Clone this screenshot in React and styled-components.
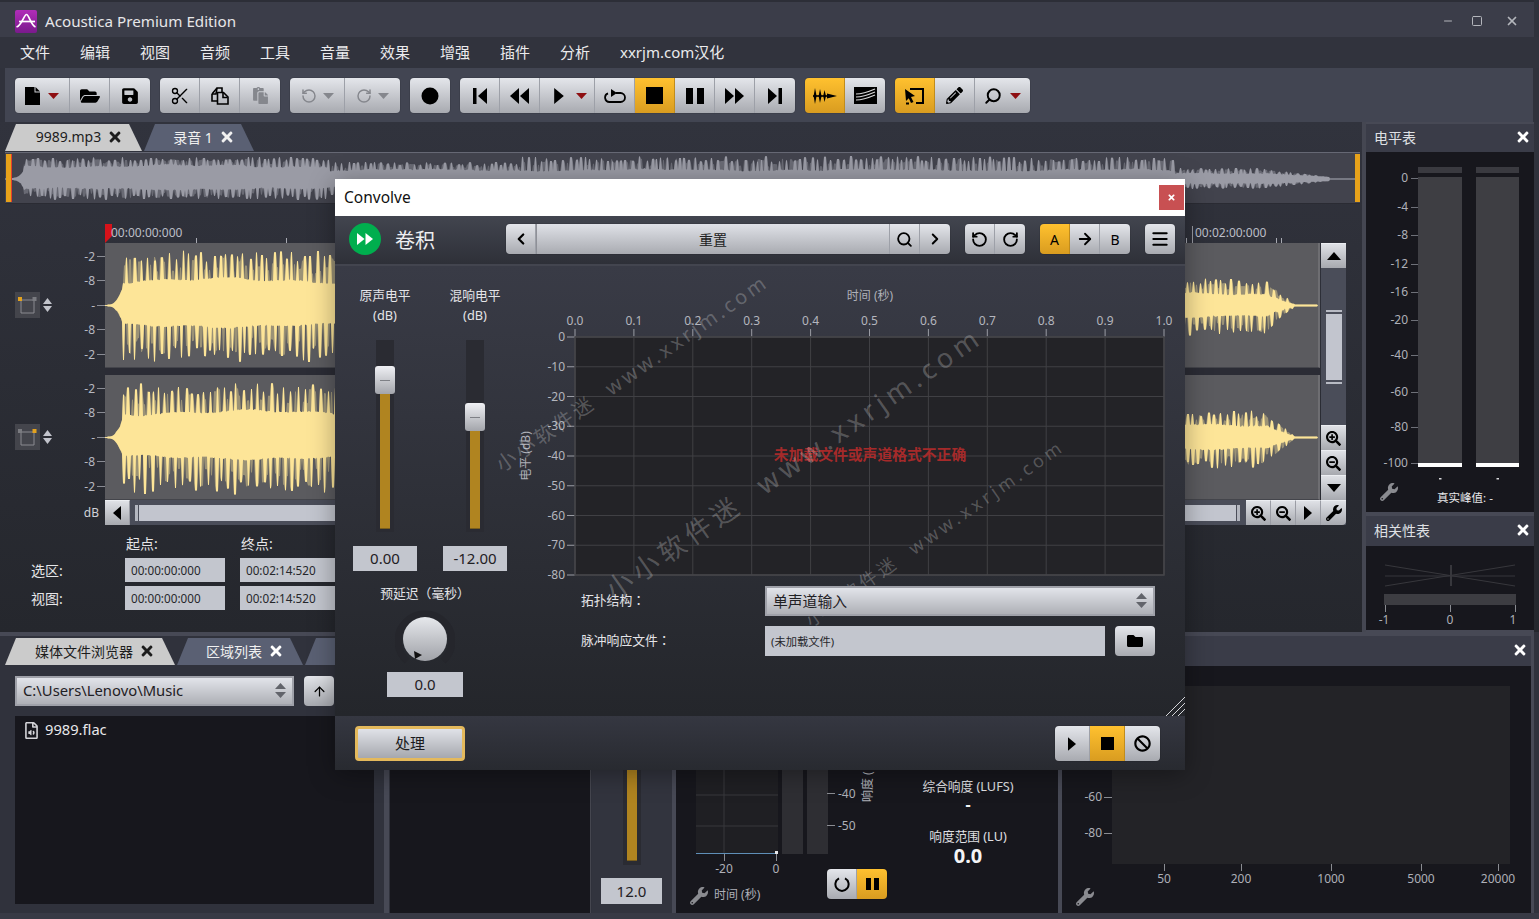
import React from 'react';
import styled, { createGlobalStyle } from 'styled-components';
import {
  FaFolderOpen, FaSave, FaPaste, FaTimes, FaWrench, FaSearchPlus, FaSearchMinus,
  FaPencilAlt, FaBan, FaFolder, FaRegFileAudio,
} from 'react-icons/fa';
import { Scissors, RotateCcw, RotateCw, Search, ChevronLeft, ChevronRight, ArrowRight, ArrowUp, Menu, Minus, Square, X } from 'lucide-react';

const FONT = `"Noto Sans", "Noto Sans CJK SC", "Open Sans", sans-serif`;

const Global = createGlobalStyle`
  html, body { margin: 0; padding: 0; background: #2b2d35; }
  * { box-sizing: border-box; }
  body { font-family: ${FONT}; }
`;

/* ---------- waveform data ---------- */
function makeRng(seed) {
  let s = seed;
  return () => {
    s = (s + 0x6d2b79f5) | 0;
    let t = Math.imul(s ^ (s >>> 15), 1 | s);
    t = (t + Math.imul(t ^ (t >>> 7), 61 | t)) ^ t;
    return ((t ^ (t >>> 14)) >>> 0) / 4294967296;
  };
}
function pulses(width, rand, minGap, maxGap, low) {
  const out = new Float32Array(width + 1);
  let x = 0;
  while (x < width) {
    const v = low + rand() * (1 - low);
    const reach = 1 + Math.floor(rand() * 2);
    for (let i = 0; i <= reach; i++) {
      if (x + i <= width) out[x + i] = Math.max(out[x + i], v);
    }
    x += minGap + Math.floor(rand() * (maxGap - minGap));
  }
  return out;
}
function wavePaths(width, center, seed, env, minGap = 5, maxGap = 9) {
  const rand = makeRng(seed);
  const pu = pulses(width, rand, minGap, maxGap, 0.6);
  const pd = pulses(width, rand, minGap, maxGap, 0.6);
  const su = pulses(width, rand, 3, 6, 0.35);
  const sd = pulses(width, rand, 3, 6, 0.35);
  const topS = [], botS = [], topH = [], botH = [];
  for (let x = 0; x <= width; x++) {
    const [tipU, coreU0, coreD0, tipD] = env(x);
    const slow = 1 + 0.08 * Math.sin(x / 37 + seed) + 0.05 * Math.sin(x / 11 + seed * 2);
    const active = coreU0 > 4;
    const coreU = active ? coreU0 * slow + (rand() - 0.5) * 1.5 : coreU0;
    const coreD = active ? coreD0 * slow + (rand() - 0.5) * 1.5 : coreD0;
    const up = coreU + Math.max(0, tipU - coreU) * pu[x];
    const dn = coreD + Math.max(0, tipD - coreD) * pd[x];
    const softU = Math.max(up, coreU + Math.max(0, tipU - coreU) * su[x] * 0.8);
    const softD = Math.max(dn, coreD + Math.max(0, tipD - coreD) * sd[x] * 0.8);
    topH.push(`${x} ${(center - up).toFixed(1)}`);
    botH.push(`${x} ${(center + dn).toFixed(1)}`);
    topS.push(`${x} ${(center - softU).toFixed(1)}`);
    botS.push(`${x} ${(center + softD).toFixed(1)}`);
  }
  const poly = (a, b) => `M${a.join('L')}L${b.reverse().join('L')}Z`;
  return { soft: poly(topS, botS), hard: poly(topH, botH) };
}
const trackEnv = (x) => {
  if (x < 3) return [0.5, 0.5, 0.5, 0.5];
  if (x < 18) {
    const k = Math.pow((x - 3) / 15, 2.6);
    const v = 1 + k * 20;
    return [v, v, v, v];
  }
  if (x < 1060) return [55, 25, 20, 57];
  if (x < 1165) return [27, 12, 11, 31];
  if (x < 1190) {
    const k = (1190 - x) / 25;
    return [1 + 22 * k, 1 + 9 * k, 1 + 8 * k, 1 + 24 * k];
  }
  if (x < 1213) return [1, 1, 1, 1];
  return [0, 0, 0, 0];
};
const overviewEnv = (x) => {
  if (x < 5) return [0.6, 0.6, 0.6, 0.6];
  if (x < 19) {
    const v = 1 + Math.pow((x - 5) / 14, 3) * 8;
    return [v, v, v, v];
  }
  if (x < 325) return [22, 13, 10, 21];
  if (x < 515) return [17, 9, 9, 17];
  if (x < 1170) return [23, 9, 9, 20];
  if (x < 1325) {
    const k = Math.min(1, (1325 - x) / 70);
    return [2 + 9 * k, 2 + 4 * k, 2 + 3 * k, 2 + 8 * k];
  }
  if (x < 1351) return [0.6, 0.6, 0.6, 0.6];
  return [0, 0, 0, 0];
};
const WAVE_A = wavePaths(1215, 62.5, 11, trackEnv);
const WAVE_B = wavePaths(1215, 62.5, 29, trackEnv);
const WAVE_O = wavePaths(1355, 26, 47, overviewEnv, 4, 9);

/* ---------- shell ---------- */
const Root = styled.div`
  position: relative; width: 1539px; height: 919px; overflow: hidden;
  display: flex; flex-direction: column;
  background: #30323c; color: #e8e8ea; font-family: ${FONT};
`;
const TitleBar = styled.div`
  height: 37px; flex: none; display: flex; align-items: center; padding: 3px 15px 0 15px;
  background: #3b3d49; border-top: 2px solid #2c2e37; margin: 0 5px 0 0;
`;
const AppName = styled.span`
  margin-left: 8px; font-size: 15.2px; color: #e6e6e8;
`;
const WinControls = styled.div`
  margin-left: auto; display: flex; gap: 17px; align-items: center; color: #b4b6bc;
`;
const WinClose = styled.span`display: inline-flex; margin-left: 5px;`;
const MenuBar = styled.div`
  height: 31px; flex: none; display: flex; align-items: center; padding: 0 0 3px 20px; background: #31333d;
`;
const MenuItem = styled.span`
  width: 60px; font-size: 15px; white-space: nowrap; color: #ebebed;
`;
const ToolBar = styled.div`
  height: 54px; flex: none; margin: 0 6px 0 5px; padding: 10px; display: flex; gap: 10px; background: #424552;
`;
const Group = styled.div`
  display: flex; height: ${p => p.$h || 35}px; border-radius: 4px; overflow: hidden;
  box-shadow: 0 0 0 1px rgba(0,0,0,.08);
`;
const Btn = styled.button`
  width: ${p => p.$w || 40}px; height: 100%; padding: 0 0 0 ${p => p.$pl || 0}px; border: 0; flex: none;
  border-right: 1px solid ${p => p.$on ? '#c08c1c' : '#9da0a8'};
  &:last-child { border-right: 0; }
  display: flex; align-items: center; justify-content: center; gap: ${p => p.$gap || 0}px;
  color: ${p => p.$dim ? '#85878d' : '#000'};
  font-family: ${FONT}; font-size: 14px;
  background: ${p => p.$on
    ? 'linear-gradient(#ffc12f, #d99c20)'
    : 'linear-gradient(#e4e6eb, #a8aab0)'};
`;

/* ---------- middle ---------- */
const Middle = styled.div`
  height: 510px; flex: none; display: flex;
  background: linear-gradient(#31333d, #25272d);
`;
const LeftCol = styled.div`
  width: 1366px; flex: none; padding-left: 5px; border-right: 4px solid #454752; display: flex; flex-direction: column;
`;
const TabRow = styled.div`
  display: flex; gap: ${p => p.$gap ?? 2}px; height: ${p => p.$h || 27}px; margin-top: 2px; flex: none;
`;
const Tab = styled.div`
  width: ${p => p.$w}px; height: 100%; flex: none;
  clip-path: polygon(11px 0, calc(100% - 13px) 0, 100% 100%, 0 100%);
  display: flex; align-items: center; justify-content: center; gap: 6px;
  padding: 0 2px 2px ${p => p.$pad ?? 2}px;
  font-size: 14px; white-space: nowrap; overflow: hidden;
  background: ${p => p.$active ? '#cbcbcb' : '#5a6073'};
  color: ${p => p.$active ? '#1d1d1d' : '#f0f0f0'};
`;
const Overview = styled.div`
  width: 1355px; height: 52px; flex: none; position: relative; margin-top: 1px;
  background: #42434d; border-top: 1px solid #666874; border-bottom: 1px solid #2a2b33;
`;
const OverviewMark = styled.div`
  position: absolute; top: 1px; bottom: 1px; width: 5px; background: #e7a21a;
  ${p => p.$right ? 'right: 0;' : 'left: 1px; border-right: 1px solid #e8402a; width: 6px;'}
`;
const EditorGrid = styled.div`
  margin-top: 20px; display: grid; flex: none;
  grid-template-columns: 100px 1215px 26px;
  grid-template-rows: 19px 125px 7px 125px 25px;
`;
const RulerSvg = styled.svg`
  grid-column: 2 / 4; grid-row: 1; display: block;
`;
const Gutter = styled.div`
  grid-column: 1; grid-row: ${p => p.$row}; display: flex; padding-left: 10px;
`;
const ChannelCtl = styled.div`
  width: 38px; height: 26px; margin-top: ${p => p.$top}px; display: flex; align-items: center; gap: 3px; flex: none;
`;
const ChannelBox = styled.div`
  width: 25px; height: 26px; background: #44454c; display: flex; align-items: center; justify-content: center;
`;
const DbScale = styled.div`
  flex: 1; display: flex; flex-direction: column; justify-content: space-between; padding: 6px 0 7px;
`;
const DbRow = styled.div`
  height: 14px; display: flex; justify-content: flex-end; align-items: center; gap: 2px; font-size: 12px; color: #b6b8c0;
  &::after { content: ''; width: 8px; height: 1px; background: #8a8c94; }
`;
const Track = styled.div`
  grid-column: 2; grid-row: ${p => p.$row}; background: #5b5b5f; border-bottom: 1px solid #44454b; position: relative;
  border-right: 2px solid #6e6e72;
  svg { display: block; }
`;
const TrackGap = styled.div`
  grid-column: 2; grid-row: 3; background: #2b2c35;
`;
const VScroll = styled.div`
  grid-column: 3; grid-row: 2 / 5; display: flex; flex-direction: column; background: #4a4d59; margin-left: 1px;
`;
const ScrollBtn = styled.button`
  width: ${p => p.$w || 25}px; height: 25px; flex: none; padding: 0; border: 0;
  display: flex; align-items: center; justify-content: center; color: #000;
  border-top: 1px solid #eceef2;
  border-right: ${p => p.$sep ? '1px solid #9a9ca4' : '0'};
  border-bottom-right-radius: ${p => p.$round ? 4 : 0}px;
  background: linear-gradient(#dfe1e6, #a7a9af);
`;
const VThumb = styled.div`
  width: 16px; height: 74px; margin: 42px auto 0; background: #c2c5ce; flex: none;
  border-top: 2px solid #b8bbc4; border-bottom: 2px solid #b8bbc4;
  box-shadow: inset 0 2px 0 #4a4d59, inset 0 -2px 0 #4a4d59;
`;
const VSpacer = styled.div`flex: 1;`;
const DbUnit = styled.div`
  grid-column: 1; grid-row: 5; display: flex; align-items: center; justify-content: flex-end; padding-right: 6px; font-size: 12px; color: #d0d2d8;
`;
const HScroll = styled.div`
  grid-column: 2 / 4; grid-row: 5; display: flex; background: #4a4d59; align-items: center;
`;
const HThumb = styled.div`
  flex: 1; height: 16px; margin: 0 6px 0 5px; background: #c2c5ce;
  border-left: 3px solid #b4b7c0; border-right: 3px solid #b4b7c0;
  box-shadow: inset 1px 0 0 #4a4d59, inset -1px 0 0 #4a4d59;
`;
const SelGrid = styled.div`
  margin: 10px 0 0 26px; display: grid; grid-template-columns: 79px 100px 100px; column-gap: 15px;
  grid-template-rows: 19px 24px 24px; row-gap: 4px; font-size: 14px; color: #e6e6e8; flex: none;
`;
const SelHead = styled.div`line-height: 18px; padding-left: 1px;`;
const SelLabel = styled.div`line-height: 25px;`;
const SelValue = styled.div`
  height: 24px; background: #c3c6ce; color: #26272b; font-size: 11.7px; line-height: 25px; padding-left: 6px;
`;

/* ---------- right panels ---------- */
const RightCol = styled.div`
  width: 168px; flex: none; display: flex; flex-direction: column; padding-top: 2px; background: #474955;
`;
const PanelHead = styled.div`
  height: ${p => p.$h || 28}px; flex: none; background: #3a3c48; display: flex; align-items: center; justify-content: space-between;
  padding: 0 ${p => p.$pr ?? 3}px 2px 8px; font-size: 14px; color: #dfe0e4;
`;
const PanelBody = styled.div`
  background: #17171d; height: ${p => p.$h}px; flex: none; margin-bottom: ${p => p.$mb || 0}px;
  svg { display: block; }
`;

/* ---------- bottom ---------- */
const HSplit = styled.div`height: 4px; flex: none; background: #474955; margin-right: 5px;`;
const Bottom = styled.div`
  flex: 1; display: flex; background: #30323c; border-bottom: 6px solid #383a45; padding-right: 5px;
`;
const BrowserPanel = styled.div`
  width: 379px; flex: none; margin-left: 5px; display: flex; flex-direction: column;
`;
const ComboRow = styled.div`
  display: flex; gap: 10px; margin: 11px 0 0 10px; height: 30px; flex: none;
`;
const Combo = styled.div`
  width: ${p => p.$w}px; height: 30px; display: flex; align-items: center; justify-content: space-between; flex: none;
  padding: 0 6px 2px; border: 2px solid #9fa1a9; color: #1f2024; font-size: 14.8px;
  background: linear-gradient(#e2e4ea, #aeb0b6);
`;
const FileList = styled.div`
  width: 359px; height: 188px; margin: 10px 0 0 10px; background: #17171d; padding: 3px 8px; flex: none;
  display: flex; gap: 5px; align-items: flex-start; font-size: 14.7px; color: #e8e8ea;
`;
const FileIcon = styled.span`display: inline-flex; margin-top: 3px; color: #d4d4d8;`;
const VSplit = styled.div`width: ${p => p.$w || 4}px; flex: none; background: #474955;`;
const BlackPanel = styled.div`
  width: ${p => p.$w}px; flex: none; background: #17171d; margin: 0 0 0 ${p => p.$ml || 0}px;
  border-right: ${p => p.$edge ? '1px solid #45464f' : '0'};
  position: relative;
`;
const SliderPanel = styled.div`
  width: 80px; flex: none; margin-left: 1px; background: #32343e; display: flex; flex-direction: column; align-items: center; padding: 0 1px 9px 0;
`;
const SliderTrack = styled.div`
  width: 18px; flex: 1; background: #2a2b32; padding: 0 4px 4px;
`;
const SliderFill = styled.div`height: 100%; background: #b08420; border-bottom: 1px solid #7a5e1c;`;
const ValueBox = styled.div`
  width: ${p => p.$w}px; height: ${p => p.$h || 26}px; flex: none; margin-top: ${p => p.$mt || 0}px; padding-bottom: ${p => p.$pb ?? 2}px;
  background: #c3c6ce; color: #1f2024; font-size: 15px; display: flex; align-items: center; justify-content: center;
`;
const LoudnessPanel = styled.div`
  width: 382px; flex: none; background: #17171d; display: flex; justify-content: space-between; position: relative;
  svg { display: block; }
`;
const MeterButtons = styled.div`
  position: absolute; left: 151px; top: 233px;
`;
const Readouts = styled.div`
  width: 180px; display: flex; flex-direction: column; align-items: center; justify-content: flex-end; padding-bottom: 46px; flex: none;
`;
const ReadLabel = styled.div`font-size: 12.7px; line-height: 18px; color: #e0e0e4;`;
const ReadSmall = styled.div`font-size: 16px; font-weight: 700; line-height: 18px; margin-bottom: 14px; color: #f2f2f4;`;
const ReadBig = styled.div`font-size: 20px; font-weight: 700; line-height: 22px; color: #f4f4f6;`;
const SpectrumPanel = styled.div`
  flex: 1; display: flex; flex-direction: column; min-width: 0; border-right: 3px solid #474955;
  svg { display: block; }
`;

/* ---------- dialog ---------- */
const Dialog = styled.div`
  position: absolute; left: 335px; top: 179px; width: 850px; height: 591px; display: flex; flex-direction: column;
  box-shadow: 0 4px 24px rgba(0,0,0,.35); overflow: hidden; z-index: 5;
`;
const DlgTitle = styled.div`
  height: 37px; flex: none; background: #fff; color: #111; font-size: 15.5px; display: flex; align-items: center; justify-content: space-between;
  padding: 0 1px 2px 9px;
`;
const DlgClose = styled.div`
  width: 25px; height: 25px; margin-top: 2px; background: #c85052; color: #fff; display: flex; align-items: center; justify-content: center;
`;
const DlgHead = styled.div`
  height: 50px; flex: none; display: flex; align-items: center; padding: 0 10px 2px 14px;
  background: linear-gradient(#42454f, #2e3038); border-bottom: 2px solid #43454f;
`;
const PlayBadge = styled.div`
  width: 32px; height: 32px; border-radius: 50%; background: #00ae4e; display: flex; align-items: center; justify-content: center; flex: none;
`;
const DlgName = styled.div`
  width: 111px; margin-left: 14px; font-size: 20px; color: #eeeef0; flex: none;
`;
const HeadGroups = styled.div`display: flex; gap: 15px;`;
const PresetName = styled.div`
  width: 354px; height: 100%; display: flex; align-items: center; justify-content: center; font-size: 14px; color: #222;
  background: linear-gradient(#dfe1e7, #a9abb1); border-left: 1px solid #8e9097; border-right: 1px solid #9da0a8;
`;
const DlgBody = styled.div`
  height: 450px; flex: none; position: relative; display: flex;
  background: linear-gradient(#393b46, #24262b);
`;
const Controls = styled.div`
  width: 170px; margin-left: 5px; flex: none; display: flex; flex-direction: column; align-items: center; padding-top: 19px;
`;
const FaderRow = styled.div`display: flex; width: 180px; flex: none; align-self: flex-start;`;
const FaderCol = styled.div`
  width: 90px; display: flex; flex-direction: column; align-items: center;
`;
const FaderLabel = styled.div`
  font-size: 12.8px; line-height: 20px; color: #e4e4e8; text-align: center; white-space: nowrap;
`;
const FaderTrack = styled.div`
  position: relative; width: 18px; height: 192px; margin-top: 15px; background: #2a2b32; padding: 0 4px 3px; display: flex; align-items: flex-end;
`;
const FaderFill = styled.div`
  width: 100%; height: ${p => p.$h}px; background: #b08420; border-bottom: 1px solid #7a5e1c;
`;
const FaderThumb = styled.div`
  position: absolute; left: -1px; top: ${p => p.$top}px; width: 20px; height: 28px; border-radius: 3px;
  background: linear-gradient(#eff0f4, #a3a5ab); display: flex; align-items: center; justify-content: center;
  &::after { content: ''; width: 10px; height: 1px; background: #7e8086; }
`;
const KnobLabel = styled.div`
  font-size: 12.8px; color: #e4e4e8; line-height: 20px; margin-top: 12px; white-space: nowrap;
`;
const KnobSvg = styled.svg`display: block; margin-top: 6px;`;
const ChartCol = styled.div`flex: 1; display: flex; flex-direction: column; min-width: 0; svg { display: block; } `;
const FormGrid = styled.div`
  position: relative; z-index: 7;
  margin-left: 71px; display: grid; grid-template-columns: 184px 390px; row-gap: 10px; grid-auto-rows: 30px;
  align-items: center; font-size: 12.8px; color: #e4e4e8;
`;
const FormLabel = styled.span`
  font-family: "Noto Sans CJK TC", "Noto Sans CJK SC", sans-serif; padding-bottom: 3px;
`;
const FileField = styled.div`display: flex; gap: 10px; height: 30px;`;
const FileInput = styled.div`
  width: 340px; background: #c3c6ce; color: #26272b; font-size: 11.3px; display: flex; align-items: center; padding-left: 6px;
`;
const Grip = styled.svg`position: absolute; right: 0; bottom: 0; display: block;`;
const DlgFoot = styled.div`
  flex: 1; display: flex; justify-content: space-between; align-items: flex-start; padding: 10px 25px 0 20px;
  background: linear-gradient(#353741, #282a30);
`;
const ProcessBtn = styled.button`
  width: 110px; height: 35px; border: 3px solid #e4b95c; border-radius: 4px; padding: 0 0 2px; font-family: ${FONT}; font-size: 15px; color: #1b1b1d;
  background: linear-gradient(#e0e2e8, #a6a8ae);
`;
const Watermark = styled.div`
  position: absolute; left: ${p => p.$x}px; top: ${p => p.$y}px; font-size: ${p => p.$fs}px; letter-spacing: ${p => p.$ls}px;
  transform: rotate(-35deg); transform-origin: 0 50%; white-space: pre; pointer-events: none;
  color: rgba(255,255,255,.24); line-height: 1;
`;

/* ---------- icons ---------- */
const P = ({ w = 16, h = 16, children, ...r }) => <svg width={w} height={h} viewBox={`0 0 ${w} ${h}`} fill="currentColor" {...r}>{children}</svg>;
const Caret = () => <P w={11} h={6} style={{ color: '#8e0f12' }}><polygon points="0,0 11,0 5.5,6" /></P>;
const DimCaret = () => <P w={11} h={6} style={{ color: '#85878d' }}><polygon points="0,0 11,0 5.5,6" /></P>;
const FileGlyph = () => <P w={15} h={18}><path d="M0 0 H9.5 V5.5 H15 V18 H0 Z" /><polygon points="10.5,0 15,4.5 10.5,4.5" /></P>;
const CopyGlyph = () => (
  <svg width="18" height="18" viewBox="0 0 18 18" fill="none" stroke="currentColor" strokeWidth="1.6">
    <path d="M1 7 L6 1 H11 V5" />
    <path d="M1 7 V14 H6" />
    <path d="M1 7 H5 L6 1" />
    <path d="M6.5 5.5 H12.5 L17 10 V17 H6.5 Z" />
    <path d="M12 6 V10.5 H16.5" />
  </svg>
);
const Rec = () => <P w={18} h={18}><circle cx="9" cy="9" r="8.5" /></P>;
const First = () => <P w={14} h={16}><rect x="0" width="3.5" height="16" /><polygon points="14,0 14,16 5,8" /></P>;
const Rew = () => <P w={19} h={16}><polygon points="9,0 9,16 0,8" /><polygon points="19,0 19,16 10,8" /></P>;
const PlayI = ({ s = 16 }) => <P w={Math.round(s * .6)} h={s} viewBox={`0 0 9.6 16`}><polygon points="0,0 9.6,8 0,16" /></P>;
const Loop = () => (
  <svg width="22" height="16" viewBox="0 0 22 16" fill="none" stroke="currentColor" strokeWidth="1.8">
    <path d="M12 5 H16.5 a4.5 4.5 0 0 1 0 9 H5.5 a4.5 4.5 0 0 1 -1.5 -8.7" />
    <polygon points="7,1 13,5 7,9" fill="currentColor" stroke="none" />
  </svg>
);
const Stop = ({ s = 17 }) => <P w={s} h={s}><rect width={s} height={s} /></P>;
const Pause = ({ s = 16 }) => <P w={Math.round(s * 1.1)} h={s}><rect width={Math.round(s * .42)} height={s} /><rect x={Math.round(s * .68)} width={Math.round(s * .42)} height={s} /></P>;
const FF = () => <P w={19} h={16}><polygon points="0,0 9,8 0,16" /><polygon points="10,0 19,8 10,16" /></P>;
const Last = () => <P w={14} h={16}><polygon points="0,0 9,8 0,16" /><rect x="10.5" width="3.5" height="16" /></P>;
const Ripple = () => (
  <P w={24} h={16}>
    <rect x="0" y="7.2" width="16" height="1.6" />
    <polygon points="2,0 3.6,8 2,16 0.6,8" />
    <polygon points="7,1 8.6,8 7,15 5.6,8" />
    <polygon points="11.5,2 13,8 11.5,14 10.2,8" />
    <polygon points="14,5.5 24,8 14,10.5" />
  </P>
);
const Env = () => (
  <svg width="23" height="17" viewBox="0 0 23 17">
    <rect width="23" height="17" fill="#000" />
    <g fill="none" stroke="#d8d8d8" strokeWidth="1.2">
      <path d="M2 7 C9 7 14 5 21 2" /><path d="M2 10 C9 10 14 8 21 5" /><path d="M2 13 C9 13 14 11 21 8" />
    </g>
  </svg>
);
const CursorBox = () => (
  <svg width="19" height="18" viewBox="0 0 19 18" fill="currentColor">
    <path d="M5 1 H19 V17 H11 V15 H17 V3 H5 Z" />
    <polygon points="0,2 10,9 6,10 8.5,15 6,16 3.8,11.2 1,14" />
    <rect x="1" y="15.5" width="3" height="2" />
  </svg>
);
const SpinArrows = () => <P w={11} h={15} style={{ color: '#62646b' }}><polygon points="5.5,0 11,6 0,6" /><polygon points="0,9 11,9 5.5,15" /></P>;
const SmallSpin = () => <P w={9} h={14} style={{ color: '#c2c4cc' }}><polygon points="4.5,0 9,6 0,6" /><polygon points="0,8 9,8 4.5,14" /></P>;
const ChanIcon = ({ left }) => (
  <svg width="19" height="17" viewBox="0 0 19 17" fill="none">
    <path d="M3 3 H16 M3 3 V16 H16 V3" stroke="#8a8b90" strokeWidth="1" />
    <rect x="0" y="0" width="4" height="4" fill={left ? '#e3a21e' : '#7a7b80'} />
    <rect x="14.5" y="0" width="4" height="4" fill={left ? '#7a7b80' : '#e3a21e'} />
  </svg>
);
const Logo = () => (
  <svg width="22" height="23" viewBox="0 0 22 23" style={{ flex: 'none' }}>
    <defs><linearGradient id="lg" x1="0" y1="0" x2="0" y2="1"><stop offset="0" stopColor="#b02db8" /><stop offset="1" stopColor="#7a1a8c" /></linearGradient></defs>
    <rect width="22" height="23" rx="2" fill="url(#lg)" />
    <g fill="none" stroke="#fff" strokeWidth="1.7">
      <path d="M1.5 17 C7 15 9 4.5 11.5 4.5 C14 4.5 15.5 15 20.5 17" />
      <path d="M4 11.5 H20" />
    </g>
  </svg>
);
const Close = ({ s = 16, c }) => <FaTimes size={s} color={c} />;

const Menuitems = ['文件', '编辑', '视图', '音频', '工具', '音量', '效果', '增强', '插件', '分析', 'xxrjm.com汉化'];

const dbLabels = ['-2', '-8', '-', '-8', '-2'];
const ChannelGutter = ({ row, left, top }) => (
  <Gutter $row={row}>
    <ChannelCtl $top={top}>
      <ChannelBox><ChanIcon left={left} /></ChannelBox>
      <SmallSpin />
    </ChannelCtl>
    <DbScale>{dbLabels.map((d, i) => <DbRow key={i}>{d}</DbRow>)}</DbScale>
  </Gutter>
);
const Wave = ({ d }) => (
  <svg width="1213" height="124" viewBox="0 0 1213 124">
    <path d={d.soft} fill="#fde598" opacity=".4" />
    <path d={d.hard} fill="#fde598" />
  </svg>
);

const rulerTicks = Array.from({ length: 14 }, (_, i) => 91 + i * 90);
const Ruler = () => (
  <RulerSvg width="1241" height="19" viewBox="0 0 1241 19">
    <polygon points="0,0 7,0 7,12 0,19" fill="#d6121a" />
    <text x="6" y="13" fontSize="12" fill="#bcbec6" fontFamily={FONT}>00:00:00:000</text>
    {rulerTicks.map(x => <rect key={x} x={x} y="14" width="1" height="5" fill="#a8aab2" />)}
    <rect x="1087" y="2" width="1" height="17" fill="#9a9ca4" />
    <text x="1090" y="13" fontSize="12" fill="#bcbec6" fontFamily={FONT}>00:02:00:000</text>
    <rect x="1176" y="14" width="1" height="5" fill="#a8aab2" />
  </RulerSvg>
);

const levelTicks = [['0', 26], ['-4', 55], ['-8', 83], ['-12', 112], ['-16', 140], ['-20', 168], ['-40', 203], ['-60', 240], ['-80', 275], ['-100', 311]];
const LevelMeter = () => (
  <svg width="168" height="360" viewBox="0 0 168 360" fontFamily={FONT}>
    {levelTicks.map(([t, y]) => (
      <g key={t}>
        <text x="42" y={y + 4} textAnchor="end" fontSize="12" fill="#aeb0b8">{t}</text>
        <rect x="45" y={y} width="7" height="1" fill="#6e7078" />
      </g>
    ))}
    {[[52, 44], [110, 43]].map(([x, w]) => (
      <g key={x}>
        <rect x={x} y="15" width={w} height="6" fill="#3a3a40" />
        <rect x={x} y="25" width={w} height="286" fill="#3e3e43" />
        <rect x={x} y="311" width={w} height="4" fill="#fff" />
        <rect x={x + w / 2 - 1} y="326" width="2.5" height="1.5" fill="#d8d8dc" />
      </g>
    ))}
    <FaWrench x="14" y="331" size="18" color="#8a8b90" />
    <text x="99" y="350" textAnchor="middle" fontSize="11.5" fill="#e8e8ea">真实峰值: -</text>
  </svg>
);
const Correlation = () => (
  <svg width="168" height="84" viewBox="0 0 168 84" fontFamily={FONT}>
    <g stroke="#37373c" strokeWidth="1">
      <line x1="19" y1="19" x2="149" y2="40" />
      <line x1="19" y1="40" x2="149" y2="19" />
      <line x1="19" y1="30" x2="149" y2="30" />
    </g>
    <rect x="84" y="19" width="2" height="21" fill="#37373c" />
    <rect x="18" y="48" width="132" height="11" fill="#3d3d42" />
    {[19, 84, 149].map(x => <rect key={x} x={x} y="59" width="1" height="7" fill="#8a8c92" />)}
    <text x="18" y="78" textAnchor="middle" fontSize="12" fill="#aeb0b8">-1</text>
    <text x="84" y="78" textAnchor="middle" fontSize="12" fill="#aeb0b8">0</text>
    <text x="147" y="78" textAnchor="middle" fontSize="12" fill="#aeb0b8">1</text>
  </svg>
);
const Loudness = () => (
  <svg width="200" height="277" viewBox="0 0 200 277" fontFamily={FONT}>
    <rect x="20" y="100" width="82" height="117" fill="#1f1f23" />
    <g stroke="#38383c" strokeWidth="1">
      <line x1="48" y1="100" x2="48" y2="217" />
      <line x1="20" y1="159" x2="102" y2="159" />
      <line x1="20" y1="190" x2="102" y2="190" />
    </g>
    <rect x="20" y="217" width="82" height="1" fill="#5f8fb8" />
    <rect x="99" y="215" width="3" height="3" fill="#e8e8ea" />
    <rect x="48" y="218" width="1" height="7" fill="#8a8c92" />
    <rect x="100" y="218" width="1" height="7" fill="#8a8c92" />
    <rect x="106" y="100" width="21" height="118" fill="#2e2e33" />
    <rect x="131" y="100" width="21" height="118" fill="#2e2e33" />
    <rect x="151" y="157" width="8" height="1" fill="#8a8c92" />
    <rect x="151" y="189" width="8" height="1" fill="#8a8c92" />
    <text x="162" y="162" fontSize="12" fill="#aeb0b8">-40</text>
    <text x="162" y="194" fontSize="12" fill="#aeb0b8">-50</text>
    <text transform="translate(196 166) rotate(-90)" fontSize="12" fill="#aeb0b8">响度 (</text>
    <text x="48" y="237" textAnchor="middle" fontSize="12" fill="#aeb0b8">-20</text>
    <text x="100" y="237" textAnchor="middle" fontSize="12" fill="#aeb0b8">0</text>
    <FaWrench x="14" y="251" size="18" color="#8a8b90" />
    <text x="38" y="263" fontSize="12" fill="#aeb0b8">时间 (秒)</text>
  </svg>
);
const Spectrum = () => (
  <svg width="465" height="247" viewBox="0 0 465 247" fontFamily={FONT}>
    <rect x="50" y="20" width="398" height="178" fill="#232327" />
    {[[102, '50'], [179, '200'], [269, '1000'], [359, '5000'], [436, '20000']].map(([x, t]) => (
      <g key={t}>
        <rect x={x} y="198" width="1" height="7" fill="#8a8c92" />
        <text x={x} y="217" textAnchor="middle" fontSize="12" fill="#aeb0b8">{t}</text>
      </g>
    ))}
    {[[131, '-60'], [167, '-80']].map(([y, t]) => (
      <g key={t}>
        <text x="40" y={y + 4} textAnchor="end" fontSize="12" fill="#aeb0b8">{t}</text>
        <rect x="42" y={y} width="8" height="1" fill="#8a8c92" />
      </g>
    ))}
    <FaWrench x="14" y="222" size="18" color="#8a8b90" />
  </svg>
);

const xTicks = Array.from({ length: 11 }, (_, i) => i);
const yTicks = Array.from({ length: 9 }, (_, i) => i);
const PX0 = 55, PX1 = 644, PY0 = 71, PY1 = 309;
const Chart = () => (
  <svg width="675" height="320" viewBox="-10 0 675 320" fontFamily={FONT}>
    <text x="350" y="34" textAnchor="middle" fontSize="12" fill="#aeb0b8">时间 (秒)</text>
    <rect x={PX0} y={PY0} width={PX1 - PX0} height={PY1 - PY0} fill="#232327" />
    {xTicks.map(i => {
      const x = PX0 + (PX1 - PX0) * i / 10;
      return (
        <g key={i}>
          <line x1={x} x2={x} y1={PY0} y2={PY1} stroke="#404044" />
          <line x1={x} x2={x} y1={PY0 - 8} y2={PY0} stroke="#9a9ca4" />
          <text x={x} y={PY0 - 12} textAnchor="middle" fontSize="12" fill="#b4b6be">{(i / 10).toFixed(1)}</text>
        </g>
      );
    })}
    {yTicks.map(i => {
      const y = PY0 + (PY1 - PY0) * i / 8;
      return (
        <g key={i}>
          <line x1={PX0} x2={PX1} y1={y} y2={y} stroke="#404044" />
          <line x1={PX0 - 8} x2={PX0} y1={y} y2={y} stroke="#9a9ca4" />
          <text x={PX0 - 10} y={y + 4} textAnchor="end" fontSize="12" fill="#b4b6be">{i === 0 ? '0' : `-${i * 10}`}</text>
        </g>
      );
    })}
    <rect x={PX0} y={PY0} width={PX1 - PX0} height={PY1 - PY0} fill="none" stroke="#46464a" strokeWidth="1.5" />
    <text transform="translate(10 190) rotate(-90)" textAnchor="middle" fontSize="12" fill="#aeb0b8">电平 (dB)</text>
    <text x="350" y="194" textAnchor="middle" fontSize="14.8" fontWeight="700" fill="#a52a2a">未加载文件或声道格式不正确</text>
  </svg>
);
const Knob = () => (
  <KnobSvg width="60" height="60" viewBox="0 0 60 60">
    <defs><linearGradient id="kn" x1="0" y1="0" x2="0" y2="1"><stop offset="0" stopColor="#e6e8ec" /><stop offset="1" stopColor="#a0a2a8" /></linearGradient></defs>
    <path d="M12 52 A27 27 0 1 1 48 52" fill="none" stroke="#25262c" strokeWidth="7" />
    <circle cx="30" cy="30" r="22" fill="url(#kn)" />
    <polygon points="19,42 27,46 20,50" fill="#111" />
  </KnobSvg>
);

export default function App() {
  return (
    <Root>
      <Global />
      <TitleBar>
        <Logo />
        <AppName>Acoustica Premium Edition</AppName>
        <WinControls>
          <Minus size={12} />
          <Square size={12} />
          <WinClose><X size={14} strokeWidth={3} /></WinClose>
        </WinControls>
      </TitleBar>
      <MenuBar>
        {Menuitems.map(m => <MenuItem key={m}>{m}</MenuItem>)}
      </MenuBar>
      <ToolBar>
        <Group>
          <Btn $w={55} $gap={8}><FileGlyph /><Caret /></Btn>
          <Btn><FaFolderOpen size={20} /></Btn>
          <Btn><FaSave size={18} /></Btn>
        </Group>
        <Group>
          <Btn><Scissors size={20} strokeWidth={1.6} /></Btn>
          <Btn><CopyGlyph /></Btn>
          <Btn $dim><FaPaste size={17} /></Btn>
        </Group>
        <Group>
          <Btn $w={55} $dim $gap={6}><RotateCcw size={16} strokeWidth={2.2} /><DimCaret /></Btn>
          <Btn $w={55} $dim $gap={6}><RotateCw size={16} strokeWidth={2.2} /><DimCaret /></Btn>
        </Group>
        <Group><Btn><Rec /></Btn></Group>
        <Group>
          <Btn><First /></Btn>
          <Btn><Rew /></Btn>
          <Btn $w={55} $gap={12} $pl={6}><PlayI /><Caret /></Btn>
          <Btn><Loop /></Btn>
          <Btn $on><Stop /></Btn>
          <Btn><Pause /></Btn>
          <Btn><FF /></Btn>
          <Btn><Last /></Btn>
        </Group>
        <Group>
          <Btn $on><Ripple /></Btn>
          <Btn><Env /></Btn>
        </Group>
        <Group>
          <Btn $on><CursorBox /></Btn>
          <Btn><FaPencilAlt size={17} /></Btn>
          <Btn $w={55} $gap={8}><Search size={18} strokeWidth={2.6} style={{ transform: 'scaleX(-1)' }} /><Caret /></Btn>
        </Group>
      </ToolBar>

      <Middle>
        <LeftCol>
          <TabRow>
            <Tab $active $w={137} $pad={14}>9989.mp3 <Close /></Tab>
            <Tab $w={110} $pad={12}>录音 1 <Close /></Tab>
          </TabRow>
          <Overview>
            <svg width="1355" height="50" viewBox="0 0 1355 50" style={{ display: 'block' }}>
              <path d={WAVE_O.soft} fill="#9a9ba5" opacity=".45" />
              <path d={WAVE_O.hard} fill="#9a9ba5" />
            </svg>
            <OverviewMark />
            <OverviewMark $right />
          </Overview>
          <EditorGrid>
            <Ruler />
            <ChannelGutter row={2} left top={49} />
            <Track $row={2}><Wave d={WAVE_A} /></Track>
            <TrackGap />
            <ChannelGutter row={4} top={49} />
            <Track $row={4}><Wave d={WAVE_B} /></Track>
            <VScroll>
              <ScrollBtn><P w={14} h={8}><polygon points="7,0 14,8 0,8" /></P></ScrollBtn>
              <VThumb />
              <VSpacer />
              <ScrollBtn><FaSearchPlus size={15} /></ScrollBtn>
              <ScrollBtn><FaSearchMinus size={15} /></ScrollBtn>
              <ScrollBtn><P w={14} h={8}><polygon points="0,0 14,0 7,8" /></P></ScrollBtn>
            </VScroll>
            <DbUnit>dB</DbUnit>
            <HScroll>
              <ScrollBtn $sep><P w={8} h={14}><polygon points="8,0 8,14 0,7" /></P></ScrollBtn>
              <HThumb />
              <ScrollBtn $sep><FaSearchPlus size={15} /></ScrollBtn>
              <ScrollBtn $sep><FaSearchMinus size={15} /></ScrollBtn>
              <ScrollBtn $sep><P w={8} h={14}><polygon points="0,0 8,7 0,14" /></P></ScrollBtn>
              <ScrollBtn $round><FaWrench size={16} /></ScrollBtn>
            </HScroll>
          </EditorGrid>
          <SelGrid>
            <span />
            <SelHead>起点:</SelHead>
            <SelHead>终点:</SelHead>
            <SelLabel>选区:</SelLabel>
            <SelValue>00:00:00:000</SelValue>
            <SelValue>00:02:14:520</SelValue>
            <SelLabel>视图:</SelLabel>
            <SelValue>00:00:00:000</SelValue>
            <SelValue>00:02:14:520</SelValue>
          </SelGrid>
        </LeftCol>
        <RightCol>
          <PanelHead>电平表<Close c="#fff" /></PanelHead>
          <PanelBody $h={360} $mb={4}><LevelMeter /></PanelBody>
          <PanelHead $h={30}>相关性表<Close c="#fff" /></PanelHead>
          <PanelBody $h={84}><Correlation /></PanelBody>
        </RightCol>
      </Middle>

      <HSplit />

      <Bottom>
        <BrowserPanel>
          <TabRow $gap={2}>
            <Tab $active $w={170} $pad={12}>媒体文件浏览器 <Close /></Tab>
            <Tab $w={126} $pad={12}>区域列表 <Close c="#fff" /></Tab>
            <Tab $w={60} />
          </TabRow>
          <ComboRow>
            <Combo $w={279}>C:\Users\Lenovo\Music<SpinArrows /></Combo>
            <Btn as="div" $w={30} style={{ borderRadius: 4 }}><ArrowUp size={15} strokeWidth={2} /></Btn>
          </ComboRow>
          <FileList>
            <FileIcon><FaRegFileAudio size={17} /></FileIcon>
            9989.flac
          </FileList>
        </BrowserPanel>
        <VSplit $w={5} />
        <BlackPanel $w={201} $ml={1} $edge />
        <SliderPanel>
          <SliderTrack><SliderFill /></SliderTrack>
          <ValueBox $w={61} $mt={13} $pb={0}>12.0</ValueBox>
        </SliderPanel>
        <VSplit />
        <LoudnessPanel>
          <Loudness />
          <MeterButtons>
            <Group $h={30}>
              <Btn $w={30}><svg width="16" height="16" viewBox="0 0 16 16" fill="none" stroke="#000" strokeWidth="2"><path d="M5 2.4 A6.6 6.6 0 1 0 11 2.4" /></svg></Btn>
              <Btn $w={30} $on><Pause s={12} /></Btn>
            </Group>
          </MeterButtons>
          <Readouts>
            <ReadLabel>综合响度 (LUFS)</ReadLabel>
            <ReadSmall>-</ReadSmall>
            <ReadLabel>响度范围 (LU)</ReadLabel>
            <ReadBig>0.0</ReadBig>
          </Readouts>
        </LoudnessPanel>
        <VSplit />
        <SpectrumPanel>
          <PanelHead $h={30} $pr={3}><span /><Close c="#fff" /></PanelHead>
          <PanelBody $h={247}><Spectrum /></PanelBody>
        </SpectrumPanel>
      </Bottom>

      <Dialog>
        <DlgTitle>
          Convolve
          <DlgClose><FaTimes size={9} /></DlgClose>
        </DlgTitle>
        <DlgHead>
          <PlayBadge><P w={16} h={12} style={{ color: '#fff' }}><polygon points="0,0 7.5,6 0,12" /><polygon points="8.5,0 16,6 8.5,12" /></P></PlayBadge>
          <DlgName>卷积</DlgName>
          <HeadGroups>
            <Group $h={30}>
              <Btn $w={30}><ChevronLeft size={18} strokeWidth={3} /></Btn>
              <PresetName>重置</PresetName>
              <Btn $w={30}><Search size={17} strokeWidth={2.6} /></Btn>
              <Btn $w={30}><ChevronRight size={18} strokeWidth={2.6} /></Btn>
            </Group>
            <Group $h={30}>
              <Btn $w={30}><RotateCcw size={17} strokeWidth={2.6} /></Btn>
              <Btn $w={30}><RotateCw size={17} strokeWidth={2.6} /></Btn>
            </Group>
            <Group $h={30}>
              <Btn $w={30} $on>A</Btn>
              <Btn $w={30}><ArrowRight size={18} strokeWidth={2.4} /></Btn>
              <Btn $w={30}>B</Btn>
            </Group>
            <Group $h={30}>
              <Btn $w={30}><Menu size={20} strokeWidth={2.4} /></Btn>
            </Group>
          </HeadGroups>
        </DlgHead>
        <DlgBody>
          <Controls>
            <FaderRow>
              <FaderCol>
                <FaderLabel>原声电平</FaderLabel>
                <FaderLabel>(dB)</FaderLabel>
                <FaderTrack>
                  <FaderFill $h={135} />
                  <FaderThumb $top={26} />
                </FaderTrack>
                <ValueBox $w={64} $h={25} $mt={14}>0.00</ValueBox>
              </FaderCol>
              <FaderCol>
                <FaderLabel>混响电平</FaderLabel>
                <FaderLabel>(dB)</FaderLabel>
                <FaderTrack>
                  <FaderFill $h={98} />
                  <FaderThumb $top={63} />
                </FaderTrack>
                <ValueBox $w={64} $h={25} $mt={14}>-12.00</ValueBox>
              </FaderCol>
            </FaderRow>
            <KnobLabel>预延迟（毫秒）</KnobLabel>
            <Knob />
            <ValueBox $w={76} $h={25} $mt={3}>0.0</ValueBox>
          </Controls>
          <ChartCol>
            <Chart />
            <FormGrid>
              <FormLabel>拓扑结构：</FormLabel>
              <Combo $w={390}>单声道输入<SpinArrows /></Combo>
              <FormLabel>脉冲响应文件：</FormLabel>
              <FileField>
                <FileInput>(未加载文件)</FileInput>
                <Btn as="div" $w={40} style={{ borderRadius: 4 }}><FaFolder size={16} /></Btn>
              </FileField>
            </FormGrid>
          </ChartCol>
          <Grip width="20" height="19" viewBox="0 0 20 19" fill="none" stroke="#d6d6da" strokeWidth="1">
            <path d="M1 19 L20 0 M7 19 L20 6 M13 19 L20 12" />
          </Grip>
        </DlgBody>
        <DlgFoot>
          <ProcessBtn>处理</ProcessBtn>
          <Group>
            <Btn $w={35}><PlayI s={14} /></Btn>
            <Btn $w={35} $on><Stop s={13} /></Btn>
            <Btn $w={35}><FaBan size={17} /></Btn>
          </Group>
        </DlgFoot>
        <Watermark $x={163} $y={278} $fs={20} $ls={3.3}>{'小小软件迷  www.xxrjm.com'}</Watermark>
        <Watermark $x={273} $y={400} $fs={27} $ls={5}>{'小小软件迷  www.xxrjm.com'}</Watermark>
        <Watermark $x={472} $y={434} $fs={18} $ls={3.8}>{'小小软件迷  www.xxrjm.com'}</Watermark>
      </Dialog>
    </Root>
  );
}
